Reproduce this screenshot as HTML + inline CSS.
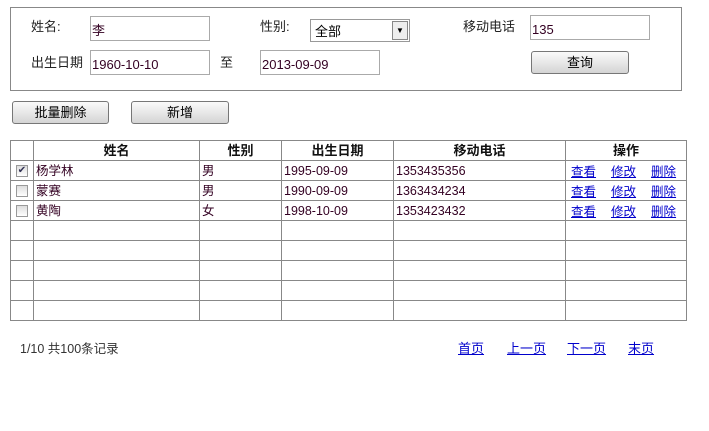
<!DOCTYPE html>
<html><head><meta charset="utf-8"><style>
*{margin:0;padding:0;box-sizing:border-box}
body{width:709px;height:431px;background:#fff;font-family:"Liberation Sans","Noto Sans CJK SC",sans-serif;font-size:12px;color:#222;position:relative;overflow:hidden}
.a{position:absolute;white-space:nowrap;line-height:14px;font-size:13px}
.box{position:absolute;left:10px;top:7px;width:672px;height:84px;border:1px solid #888}
.in{position:absolute;border:1px solid #aaa;background:#fff;height:25px;padding:5px 1px 1px;font-size:13px;line-height:17px;color:#302}
.btn{position:absolute;height:23px;border:1px solid #777;border-radius:3px;background:linear-gradient(#fafafa,#e4e4e4 60%,#d4d4d4);text-align:center;line-height:21px;font-size:13px;color:#000}
table{position:absolute;left:10px;top:140px;border-collapse:collapse;width:677px;table-layout:fixed}
td,th{border:1px solid #888;height:20px;padding:0 2px;font-size:12.5px;line-height:14px;text-align:left;font-weight:normal;color:#302;white-space:nowrap;overflow:hidden}
th{text-align:center;font-weight:bold;color:#111;font-size:13px}
a{color:#00c;text-decoration:underline}
td a{margin-right:15px}
.cb{display:inline-block;width:12px;height:12px;border:1px solid #999;background:linear-gradient(#ddd,#fff);vertical-align:middle;font-size:10px;line-height:10px;text-align:center;color:#335}
</style></head><body>
<div class="box"></div>
<div class="a" style="left:31px;top:20px">姓名:</div>
<div class="in" style="left:90px;top:16px;width:120px">李</div>
<div class="a" style="left:260px;top:20px">性别:</div>
<div class="in" style="left:310px;top:19px;width:100px;height:23px;padding:3px 4px;border-color:#999;color:#000">全部<span style="position:absolute;right:1px;top:1px;width:16px;height:19px;border:1px solid #888;background:#eee;font-size:8px;text-align:center;line-height:17px">▼</span></div>
<div class="a" style="left:463px;top:20px">移动电话</div>
<div class="in" style="left:530px;top:15px;width:120px">135</div>
<div class="a" style="left:31px;top:56px">出生日期</div>
<div class="in" style="left:90px;top:50px;width:120px">1960-10-10</div>
<div class="a" style="left:220px;top:56px">至</div>
<div class="in" style="left:260px;top:50px;width:120px">2013-09-09</div>
<div class="btn" style="left:531px;top:51px;width:98px">查询</div>
<div class="btn" style="left:12px;top:101px;width:97px">批量删除</div>
<div class="btn" style="left:131px;top:101px;width:98px">新增</div>
<table>
<colgroup><col style="width:23px"><col style="width:166px"><col style="width:82px"><col style="width:112px"><col style="width:172px"><col style="width:121px"></colgroup>
<tr><th></th><th>姓名</th><th>性别</th><th>出生日期</th><th>移动电话</th><th>操作</th></tr>
<tr><td style="text-align:center"><span class="cb">✔</span></td><td>杨学林</td><td>男</td><td>1995-09-09</td><td>1353435356</td><td style="padding:2px 0 0 5px"><a>查看</a><a>修改</a><a>删除</a></td></tr>
<tr><td style="text-align:center"><span class="cb"></span></td><td>蒙赛</td><td>男</td><td>1990-09-09</td><td>1363434234</td><td style="padding:2px 0 0 5px"><a>查看</a><a>修改</a><a>删除</a></td></tr>
<tr><td style="text-align:center"><span class="cb"></span></td><td>黄陶</td><td>女</td><td>1998-10-09</td><td>1353423432</td><td style="padding:2px 0 0 5px"><a>查看</a><a>修改</a><a>删除</a></td></tr>
<tr><td></td><td></td><td></td><td></td><td></td><td></td></tr>
<tr><td></td><td></td><td></td><td></td><td></td><td></td></tr>
<tr><td></td><td></td><td></td><td></td><td></td><td></td></tr>
<tr><td></td><td></td><td></td><td></td><td></td><td></td></tr>
<tr><td></td><td></td><td></td><td></td><td></td><td></td></tr>
</table>
<div class="a" style="left:20px;top:342px;color:#333;font-size:12.5px">1/10 共100条记录</div>
<a class="a" style="left:458px;top:342px">首页</a>
<a class="a" style="left:507px;top:342px">上一页</a>
<a class="a" style="left:567px;top:342px">下一页</a>
<a class="a" style="left:628px;top:342px">末页</a>
</body></html>
